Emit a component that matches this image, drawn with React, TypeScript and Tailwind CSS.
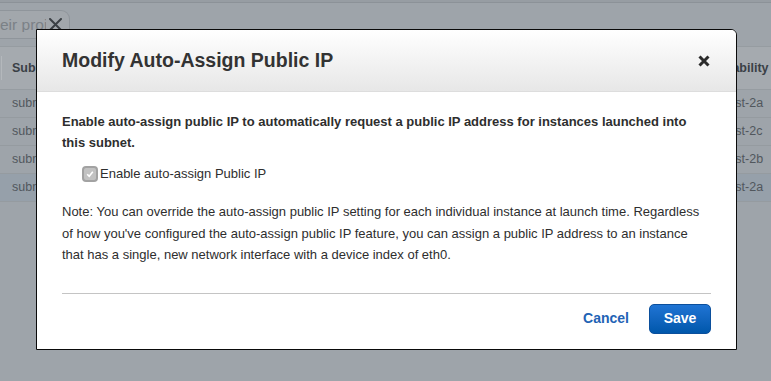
import React from 'react'

export default function App() {
  const rows = [
    { id: 'subnet-0a1b2c3d', az: 'us-west-2a', selected: false },
    { id: 'subnet-4e5f6a7b', az: 'us-west-2c', selected: false },
    { id: 'subnet-8c9d0e1f', az: 'us-west-2b', selected: false },
    { id: 'subnet-2a3b4c5d', az: 'us-west-2a', selected: true },
  ]

  return (
    <div className="relative w-full h-[381px] overflow-hidden bg-[#9ea4aa] font-['Liberation_Sans',Arial,sans-serif]">
      {/* dimmed page behind the modal */}
      <div className="h-[3px] bg-[#979da3] border-b border-[#8c9298]" />

      <div className="h-[43px] pt-[7px]">
        <div className="flex items-center w-[70px] h-[29px] bg-[#a2a7ac] border border-l-0 border-[#8f959b] rounded-r-[9px]">
          <div className="w-[46px] overflow-hidden whitespace-nowrap text-[15.5px] text-[#7b8187] leading-none">
            eir project
          </div>
          <svg width="13" height="13" viewBox="0 0 13 13" className="ml-[3px]">
            <path d="M1 1 L12 12 M12 1 L1 12" stroke="#3b4045" strokeWidth="2" strokeLinecap="round" />
          </svg>
        </div>
      </div>

      <div className="text-[12.5px]">
        <div className="grid grid-cols-[703px_1fr] h-[44px] bg-[#a5aaaf] border-y border-[#969ca1] items-center font-bold text-[#3a4046]">
          <div className="flex items-center">
            <div className="w-px h-[24px] bg-[#b4b8bc] ml-[1px]" />
            <span className="ml-[10px]">Subnet ID</span>
          </div>
          <div className="whitespace-nowrap">Availability Zone</div>
        </div>
        {rows.map((r) => (
          <div
            key={r.id + r.az}
            className={`grid grid-cols-[703px_1fr] h-[28px] items-center border-b border-[#959ba0] text-[#51575d] ${
              r.selected ? 'bg-[#96a0aa]' : ''
            }`}
          >
            <div className="pl-[12px]">{r.id}</div>
            <div className="whitespace-nowrap -ml-[1px]">{r.az}</div>
          </div>
        ))}
      </div>

      {/* modal */}
      <div className="absolute left-[36px] top-[29px] w-[701px] h-[321px] bg-white border border-[#0a0a0a] rounded-tr-[6px] overflow-hidden flex flex-col">
        <div className="h-[62px] shrink-0 px-[25px] flex items-center justify-between bg-gradient-to-b from-white to-[#e7e7e7] border-b border-[#dddddd]">
          <h1 className="text-[19.5px] font-bold text-[#333]">Modify Auto-Assign Public IP</h1>
          <svg width="12" height="12" viewBox="0 0 12 12" className="mr-[1px]">
            <path d="M1.5 1.5 L10.5 10.5 M10.5 1.5 L1.5 10.5" stroke="#2b2b2b" strokeWidth="3" />
          </svg>
        </div>

        <div className="flex-1 px-[25px] pt-[19px] text-[13px] text-[#2e2e2e]">
          <p className="font-bold leading-[21px]">
            Enable auto-assign public IP to automatically request a public IP address for instances launched into
            this subnet.
          </p>

          <label className="flex items-center mt-[10px] ml-[20px] h-[21px]">
            <span className="w-[16px] h-[16px] rounded-[4px] bg-[#a2a2a2] p-[2px]">
              <span className="flex items-center justify-center w-full h-full rounded-[2px] bg-[#c2c2c2]">
                <svg width="8" height="8" viewBox="0 0 8 8">
                  <path d="M1.2 4.2 L3.2 6.2 L6.8 1.8" stroke="white" strokeWidth="1.6" fill="none" />
                </svg>
              </span>
            </span>
            <span className="ml-[2px]">Enable auto-assign Public IP</span>
          </label>

          <p className="mt-[17px] leading-[21.5px]">
            Note: You can override the auto-assign public IP setting for each individual instance at launch time. Regardless
            of how you've configured the auto-assign public IP feature, you can assign a public IP address to an instance
            that has a single, new network interface with a device index of eth0.
          </p>

          <div className="mt-[27px] border-t border-[#c4c4c4]" />

          <div className="flex items-center justify-end gap-[20px] pt-[10px]">
            <button className="text-[14px] font-bold text-[#2263b5]">Cancel</button>
            <button className="w-[62px] h-[30px] rounded-[5px] border border-[#0b4f9c] bg-gradient-to-b from-[#1f74d4] to-[#0057ab] text-[14px] font-bold text-white">
              Save
            </button>
          </div>
        </div>
      </div>
    </div>
  )
}
